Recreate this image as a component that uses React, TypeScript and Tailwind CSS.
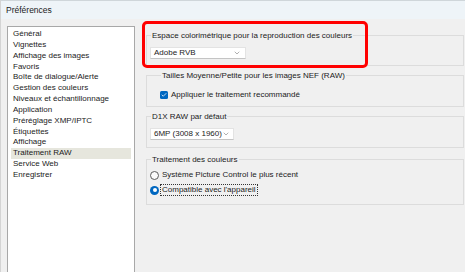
import { ChevronDown, Check } from 'lucide-react'

const items = [
  'Général',
  'Vignettes',
  'Affichage des images',
  'Favoris',
  'Boîte de dialogue/Alerte',
  'Gestion des couleurs',
  'Niveaux et échantillonnage',
  'Application',
  'Préréglage XMP/IPTC',
  'Étiquettes',
  'Affichage',
  'Traitement RAW',
  'Service Web',
  'Enregistrer',
]

function Dropdown({ label, width }: { label: string; width: string }) {
  return (
    <div className={`${width} h-[12px] bg-white border border-[#e3e3e3] border-b-[#c4c4c4] flex items-center justify-between pl-[3px] pr-[4px] whitespace-nowrap`}>
      <span className="leading-none">{label}</span>
      <ChevronDown className="w-[8px] h-[8px] text-[#606060] shrink-0" strokeWidth={1.5} />
    </div>
  )
}

function Group({ title, className, children }: { title: string; className: string; children: React.ReactNode }) {
  return (
    <fieldset className={`border border-[#dcdcdc] ${className}`}>
      <legend className="ml-[1px] px-[1px] leading-[11px]">{title}</legend>
      {children}
    </fieldset>
  )
}

export default function App() {
  return (
    <div className="w-[465px] h-[272px] bg-[#f0f0f0] text-[8px] text-[#1b1b1b] flex flex-col overflow-hidden border-l border-[#d4d4d4]" style={{ fontFamily: '"Liberation Sans", Arial, sans-serif' }}>
      {/* Title bar */}
      <div className="h-[19px] shrink-0 bg-[#eef4f8] border-t border-[#cfd6da] flex items-center pl-[5px] text-[8.5px]">
        Préférences
      </div>

      <div className="flex flex-1 min-h-0">
        {/* Left: categories */}
        <div className="ml-[6px] mt-[7px] w-[128px] bg-white border border-[#a8a8a8] border-b-0 pt-[2px] px-[3px]">
          {items.map((item) => (
            <div
              key={item}
              className={`leading-[10.85px] pl-[2px] ${item === 'Traitement RAW' ? 'bg-[#e6e6dd]' : ''}`}
            >
              {item}
            </div>
          ))}
        </div>

        {/* Right: settings */}
        <div className="flex-1 pl-[11px] pr-[1px] pt-[11px] flex flex-col gap-[4px]">
          <div className="relative">
            <Group title="Espace colorimétrique pour la reproduction des couleurs" className="h-[36px] pl-[3px] pt-[6px]">
              <Dropdown label="Adobe RVB" width="w-[96px]" />
            </Group>
            {/* Highlight annotation */}
            <div className="absolute left-[-4px] top-[-9px] w-[226px] h-[47px] border-[3px] border-[#ff0000] rounded-[5px] pointer-events-none" />
          </div>

          <Group title="Tailles Moyenne/Petite pour les images NEF (RAW)" className="h-[37px] pl-[13px] pt-[10px]">
            <div className="flex items-center gap-[3px]">
              <div className="w-[8px] h-[8px] rounded-[1.5px] bg-[#0067c0] flex items-center justify-center">
                <Check className="w-[6px] h-[6px] text-white" strokeWidth={3} />
              </div>
              <span className="leading-none">Appliquer le traitement recommandé</span>
            </div>
          </Group>

          <Group title="D1X RAW par défaut" className="h-[37px] pl-[3px] pt-[6px]">
            <Dropdown label="6MP (3008 x 1960)" width="w-[84px]" />
          </Group>

          <Group title="Traitement des couleurs" className="mt-[2px] h-[51px] pl-[3px] pt-[5px] flex flex-col gap-[5px]">
            <div className="flex items-center gap-[3px] h-[10px]">
              <div className="w-[9px] h-[9px] rounded-full border border-[#5c5c5c] bg-[#fafafa]" />
              <span className="leading-none">Système Picture Control le plus récent</span>
            </div>
            <div className="flex items-center gap-[2px] h-[10px]">
              <div className="w-[9px] h-[9px] rounded-full bg-[#0067c0] flex items-center justify-center">
                <div className="w-[4px] h-[4px] rounded-full bg-white" />
              </div>
              <span className="leading-none outline-1 outline-dotted outline-[#333] px-[1px] py-[1px]">Compatible avec l'appareil</span>
            </div>
          </Group>
        </div>
      </div>
    </div>
  )
}
